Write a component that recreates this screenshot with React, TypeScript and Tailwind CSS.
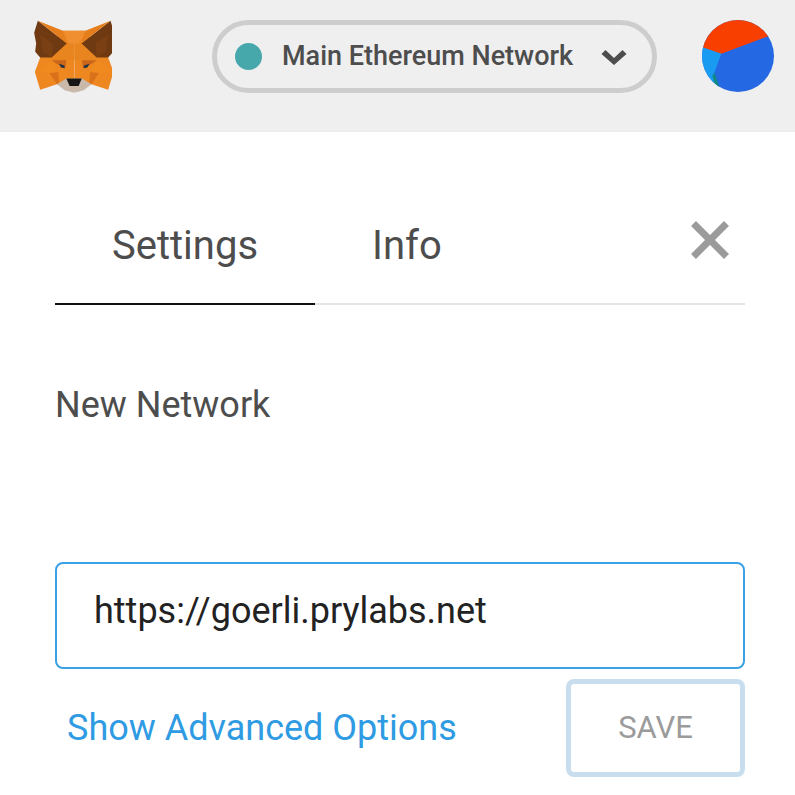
import React from 'react';

const FoxSide = () => (
  <>
    <polygon points="62,142 130,62 163,62 163,240 112,222 62,238 46,185" fill="#ee8720" />
    <polygon points="55,32 44,68 50,100 47,125 62,142 97,142 142,100" fill="#6f3a12" />
    <polygon points="62,75 100,100 97,142 70,125" fill="#7a4014" />
    <polygon points="55,32 130,62 142,100" fill="#e57f1e" />
    <polygon points="97,142 142,100 163,100 163,150 140,150 96,150" fill="#e9851f" />
    <polygon points="96,150 140,150 138,170 116,164" fill="#c9661a" />
    <polygon points="46,185 96,150 112,178 90,188" fill="#f08a1f" />
    <polygon points="90,188 116,186 118,216 112,222" fill="#d9701a" />
    <polygon points="112,222 140,205 163,205 163,247 135,240" fill="#c9b9aa" />
    <polygon points="118,161 134,166 136,174 124,172" fill="#233447" />
  </>
);

const FoxLogo = () => (
  <svg viewBox="44 30 232 218" className="w-[78px] h-[73px] shrink-0">
    <FoxSide />
    <g transform="translate(327 0) scale(-1 1)">
      <FoxSide />
    </g>
    <polygon points="130,62 197,62 178,100 148,100" fill="#ef8f30" />
    <polygon points="140,205 186,205 177,227 150,227" fill="#161616" />
  </svg>
);

const Avatar = () => (
  <svg viewBox="37 29 216 216" className="w-[72px] h-[72px] shrink-0">
    <defs>
      <clipPath id="identicon">
        <circle cx="145" cy="137" r="108" />
      </clipPath>
    </defs>
    <g clipPath="url(#identicon)">
      <rect x="30" y="20" width="230" height="230" fill="#2468e4" />
      <polygon points="30,110 95,130 240,76 240,20 30,20" fill="#f93f00" />
      <polygon points="30,108 95,130 72,192 90,240 30,240" fill="#1a9bf2" />
      <polygon points="68,195 75,188 90,232 76,226" fill="#0f8a85" />
    </g>
  </svg>
);

const App: React.FC = () => {
  return (
    <div className="w-[795px] h-[795px] overflow-hidden bg-white font-['Roboto',sans-serif]">
      <header className="h-[132px] bg-[#efefef] border-b border-[#ececec] flex items-start justify-between pt-5 pl-[34px] pr-[21px]">
        <FoxLogo />
        <div className="w-[445px] h-[73px] ml-[100px] mr-[45px] border-[5px] border-[#cdcdcd] rounded-full flex items-center pl-[18px] pr-[25px]">
          <span className="w-[27px] h-[27px] rounded-full bg-[#47a8ab] shrink-0" />
          <span className="ml-5 text-[27px] font-medium text-[#4d4d4d] whitespace-nowrap">
            Main Ethereum Network
          </span>
          <svg viewBox="0 0 25 16" className="ml-auto w-[26px] h-4" fill="#4d4d4d">
            <polygon points="0,5 4,1 12.5,9 21,1 25,5 12.5,16" />
          </svg>
        </div>
        <Avatar />
      </header>

      <main className="pl-[55px] pr-[50px]">
        <div className="relative flex h-[173px] items-end border-b-2 border-[#e5e5e5]">
          <div className="w-[260px] h-[91px] -mb-0.5 border-b-2 border-[#111] text-center text-[40px] leading-[47px] text-[#4d4d4d] pt-2">
            Settings
          </div>
          <div className="ml-[57px] h-[91px] text-[40px] leading-[47px] text-[#4d4d4d] pt-2.5">
            Info
          </div>
          <svg viewBox="0 0 40 40" className="absolute right-[15px] top-[88px] w-10 h-10" fill="none">
            <path d="M3.5 3.5 36.5 36.5M36.5 3.5 3.5 36.5" stroke="#9b9b9b" strokeWidth="7" />
          </svg>
        </div>

        <p className="mt-20 text-[36px] leading-10 text-[#4d4d4d]">New Network</p>

        <div className="mt-[137px] h-[107px] border-2 border-[#3aa1e4] rounded-lg flex items-center pl-[37px] pb-[10px] text-[36px] text-[#222222]">
          https://goerli.prylabs.net
        </div>

        <div className="mt-[10px] flex items-center justify-between">
          <span className="ml-3 text-[36px] text-[#2f9be3]">Show Advanced Options</span>
          <button className="w-[179px] h-[98px] border-[5px] border-[#c8deee] rounded-lg text-[31px] text-[#9b9b9b]">
            SAVE
          </button>
        </div>
      </main>
    </div>
  );
};

export default App;
